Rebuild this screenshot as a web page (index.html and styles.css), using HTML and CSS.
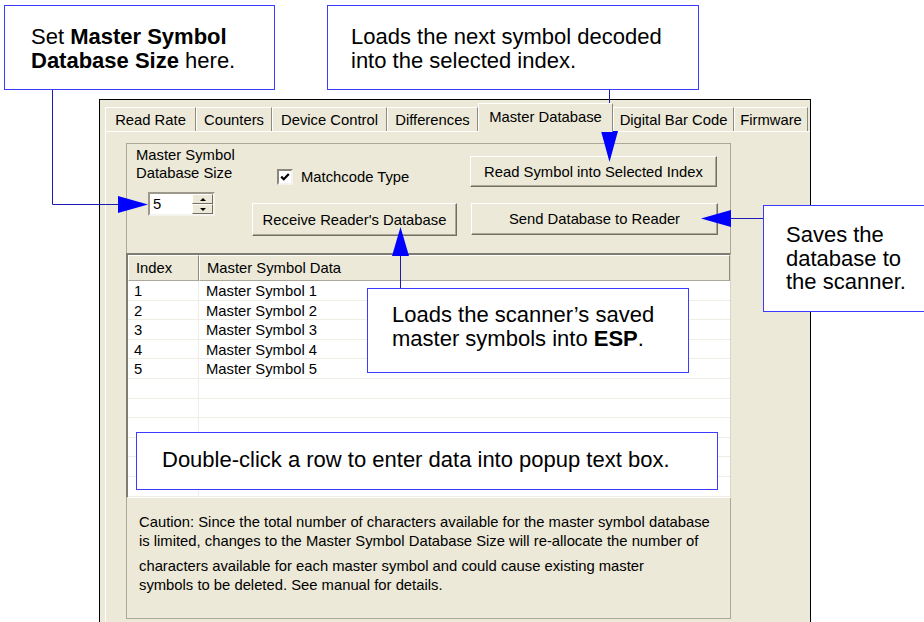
FILE: index.html
```html
<!DOCTYPE html>
<html lang="en">
<head>
    <meta charset="UTF-8">
    <meta name="viewport" content="width=device-width, initial-scale=1.0">
    <title>Master Database</title>
    <link rel="stylesheet" href="styles.css">
</head>
<body>
<div class="page">

    <!-- Dialog window -->
    <div class="window">
        <div class="tabs">
            <div class="tab">Read Rate</div>
            <div class="tab">Counters</div>
            <div class="tab">Device Control</div>
            <div class="tab">Differences</div>
            <div class="tab tab-active">Master Database</div>
            <div class="tab">Digital Bar Code</div>
            <div class="tab">Firmware</div>
        </div>

        <div class="tab-page">
            <div class="group">
                <div class="controls">
                    <div class="col-size">
                        <div class="size-label">Master Symbol<br>Database Size</div>
                        <div class="spinner">
                            <div class="spinner-value">5</div>
                            <div class="spin-btns">
                                <div class="spin-btn"><span class="arrow-up"></span></div>
                                <div class="spin-btn"><span class="arrow-down"></span></div>
                            </div>
                        </div>
                    </div>
                    <div class="col-mid">
                        <div class="check-row">
                            <span class="checkbox">
                                <svg width="12" height="12" viewBox="0 0 12 12"><polyline points="2.2,5.6 4.8,8.2 9.8,3" fill="none" stroke="#000" stroke-width="2.2"/></svg>
                            </span>
                            Matchcode Type
                        </div>
                        <button class="btn btn-receive">Receive Reader's Database</button>
                    </div>
                    <div class="col-right">
                        <button class="btn btn-read">Read Symbol into Selected Index</button>
                        <button class="btn btn-send">Send Database to Reader</button>
                    </div>
                </div>

                <div class="list">
                    <div class="list-head">
                        <div class="head-cell">Index</div>
                        <div class="head-cell">Master Symbol Data</div>
                    </div>
                    <div class="row"><div class="cell-index">1</div><div class="cell-data">Master Symbol 1</div></div>
                    <div class="row"><div class="cell-index">2</div><div class="cell-data">Master Symbol 2</div></div>
                    <div class="row"><div class="cell-index">3</div><div class="cell-data">Master Symbol 3</div></div>
                    <div class="row"><div class="cell-index">4</div><div class="cell-data">Master Symbol 4</div></div>
                    <div class="row"><div class="cell-index">5</div><div class="cell-data">Master Symbol 5</div></div>
                    <div class="row"><div class="cell-index"></div><div class="cell-data"></div></div>
                    <div class="row"><div class="cell-index"></div><div class="cell-data"></div></div>
                    <div class="row"><div class="cell-index"></div><div class="cell-data"></div></div>
                    <div class="row"><div class="cell-index"></div><div class="cell-data"></div></div>
                    <div class="row"><div class="cell-index"></div><div class="cell-data"></div></div>
                    <div class="row"><div class="cell-index"></div><div class="cell-data"></div></div>
                </div>

                <div class="caution">
                    <p>Caution: Since the total number of characters available for the master symbol database<br>is limited, changes to the Master Symbol Database Size will re-allocate the number of</p>
                    <p>characters available for each master symbol and could cause existing master<br>symbols to be deleted. See manual for details.</p>
                </div>
            </div>
        </div>
    </div>

    <!-- Leader lines and arrows -->
    <svg class="leaders" width="924" height="622" viewBox="0 0 924 622">
        <g stroke="#1c1cb4" stroke-width="1" fill="none">
            <polyline points="52.5,89 52.5,204.5 119,204.5"/>
            <line x1="609.5" y1="89" x2="609.5" y2="132"/>
            <line x1="400.5" y1="288" x2="400.5" y2="255"/>
            <line x1="763" y1="218.5" x2="730" y2="218.5"/>
        </g>
        <g fill="#0000ff">
            <polygon points="118,196 148,204.5 118,213"/>
            <polygon points="601,131 618,131 609.5,162"/>
            <polygon points="392,256 409,256 400.5,227"/>
            <polygon points="731,210 731,227 701,218.5"/>
        </g>
    </svg>

    <!-- Callouts -->
    <div class="callout callout-size">Set <b>Master Symbol<br>Database Size</b> here.</div>
    <div class="callout callout-read">Loads the next symbol decoded<br>into the selected index.</div>
    <div class="callout callout-receive">Loads the scanner’s saved<br>master symbols into <b>ESP</b>.</div>
    <div class="callout callout-send">Saves the<br>database to<br>the scanner.</div>
    <div class="callout callout-row">Double-click a row to enter data into popup text box.</div>

</div>
</body>
</html>
```

FILE: styles.css
```css
body {
    margin: 0;
    background-color: #fff;
    font-family: "Liberation Sans", Arial, sans-serif;
}
.page {
    position: relative;
    box-sizing: border-box;
    width: 924px;
    height: 622px;
    padding: 99px 0 0 99px;
    overflow: hidden;
}

/* --- Dialog window --- */
.window {
    box-sizing: border-box;
    width: 712px;
    height: 523px;
    border: 1px solid #000;
    border-bottom: none;
    background-color: #ece9d8;
    font-size: 14.8px;
    color: #000;
}
.tabs {
    display: grid;
    grid-template-columns: 91px 76px 115px 91px 135px 121px 74px;
    grid-template-rows: 28px;
    align-items: end;
    padding: 3px 0 0 5px;
}
.tab {
    box-sizing: border-box;
    height: 24px;
    padding-top: 1px;
    border-top: 1px solid #fff;
    border-left: 1px solid #fff;
    border-right: 1px solid #8d8a7e;
    line-height: 22px;
    text-align: center;
    white-space: nowrap;
}
.tab-active {
    position: relative; /* sits over the page's top edge */
    z-index: 1;
    height: 29px;
    margin-bottom: -1px;
    line-height: 24px;
    background-color: #ece9d8;
}
.tab-page {
    box-sizing: border-box;
    height: 491px;
    margin-left: 5px;
    padding: 11px 0 0 20px;
    border-top: 1px solid #fff;
    border-left: 1px solid #fff;
}
.group {
    box-sizing: border-box;
    width: 605px;
    height: 476px;
    border: 1px solid #aca899;
}

/* --- Top controls --- */
.controls {
    display: flex;
    height: 109px;
}
.col-size {
    box-sizing: border-box;
    width: 125px;
    padding-left: 9px;
}
.size-label {
    margin-top: 2px;
    line-height: 18px;
}
.spinner {
    display: flex;
    box-sizing: border-box;
    width: 67px;
    height: 24px;
    margin: 10px 0 0 12px;
    border: 2px solid;
    border-color: #9c998c #f4f3ee #f4f3ee #9c998c;
    background-color: #fff;
}
.spinner-value {
    flex: 1;
    padding-left: 3px;
    line-height: 20px;
}
.spin-btns {
    display: flex;
    flex-direction: column;
    width: 21px;
}
.spin-btn {
    display: flex;
    flex: 1;
    align-items: center;
    justify-content: center;
    border: 1px solid;
    border-color: #fff #716f64 #716f64 #fff;
    background-color: #ece9d8;
}
.arrow-up {
    border-left: 3px solid transparent;
    border-right: 3px solid transparent;
    border-bottom: 3px solid #000;
}
.arrow-down {
    border-left: 3px solid transparent;
    border-right: 3px solid transparent;
    border-top: 3px solid #000;
}
.col-mid {
    width: 205px;
}
.check-row {
    display: flex;
    align-items: center;
    gap: 8px;
    height: 16px;
    margin: 25px 0 0 25px;
}
.checkbox {
    display: flex;
    align-items: center;
    justify-content: center;
    box-sizing: border-box;
    width: 16px;
    height: 16px;
    border: 2px solid;
    border-color: #8a877a #f4f3ee #f4f3ee #8a877a;
    background-color: #fff;
}
.col-right {
    margin-left: 13px;
}
.btn {
    display: block;
    box-sizing: border-box;
    padding: 0;
    font: inherit;
    color: #000;
    background-color: #ece9d8;
    border: 1px solid;
    border-color: #fff #716f64 #716f64 #fff;
    box-shadow: inset -1px -1px #aca899;
    white-space: nowrap;
}
.btn-receive {
    width: 205px;
    height: 33px;
    margin-top: 18px;
}
.btn-read {
    width: 247px;
    height: 31px;
    margin-top: 12px;
}
.btn-send {
    width: 247px;
    height: 32px;
    margin: 16px 0 0 1px;
}

/* --- List view --- */
.list {
    box-sizing: border-box;
    height: 245px;
    margin: 0 -1px;
    border-top: 2px solid #7f7d72;
    border-left: 2px solid #7f7d72;
    border-right: 1px solid #d8d5c8;
    border-bottom: 1px solid #fff;
    background-color: #fff;
    overflow: hidden;
}
.list-head {
    display: grid;
    grid-template-columns: 71px 1fr;
    height: 26px;
}
.head-cell {
    padding-left: 7px;
    line-height: 24px;
    background-color: #ece9d8;
    border: 1px solid;
    border-color: #fff #8d8a7e #aca899 #fff;
}
.row {
    display: grid;
    grid-template-columns: 71px 1fr;
    box-sizing: border-box;
    height: 19.6px;
    border-bottom: 1px solid #efede4;
}
.row div {
    padding-top: 2px;
    line-height: 16.5px;
}
.cell-index {
    padding-left: 6px;
    border-right: 1px solid #efede4;
}
.cell-data {
    padding-left: 7px;
}

/* --- Caution text --- */
.caution {
    padding: 15px 0 0 12px;
}
.caution p {
    margin: 0 0 6px;
    line-height: 19px;
}

/* --- Annotations --- */
.leaders {
    position: absolute;
    left: 0;
    top: 0;
}
.callout {
    position: absolute;
    box-sizing: border-box;
    background-color: #fff;
    border: 1px solid #3c3cff;
    font-size: 22px;
    line-height: 23.5px;
    color: #000;
}
.callout-size {
    left: 4px;
    top: 5px;
    width: 271px;
    height: 85px;
    padding: 19px 0 0 26px;
}
.callout-read {
    left: 327px;
    top: 5px;
    width: 372px;
    height: 85px;
    padding: 19px 0 0 23px;
}
.callout-receive {
    left: 367px;
    top: 288px;
    width: 322px;
    height: 85px;
    padding: 14px 0 0 24px;
}
.callout-send {
    left: 763px;
    top: 205px;
    width: 175px;
    height: 107px;
    padding: 17px 0 0 22px;
}
.callout-row {
    left: 136px;
    top: 432px;
    width: 582px;
    height: 58px;
    padding: 16px 0 0 25px;
    line-height: 22px;
}
```
